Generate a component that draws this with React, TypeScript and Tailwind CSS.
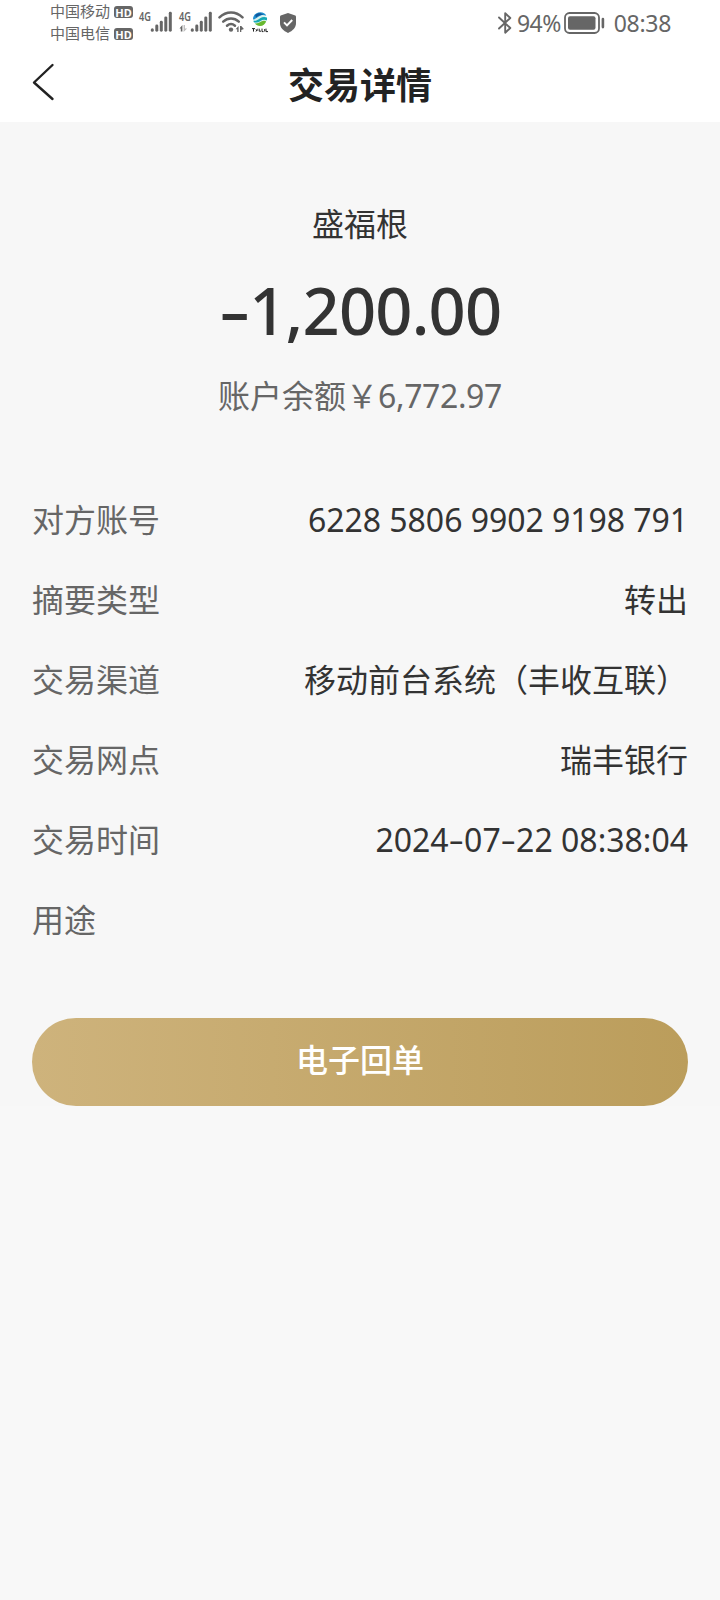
import { Fragment } from 'react'
import clsx from 'clsx'

type DetailItem = {
  label: string
  value: string
  className?: string
}

const details: DetailItem[] = [
  { label: '对方账号', value: '6228 5806 9902 9198 791', className: 'tracking-[-0.05px]' },
  { label: '摘要类型', value: '转出' },
  { label: '交易渠道', value: '移动前台系统（丰收互联）' },
  { label: '交易网点', value: '瑞丰银行' },
  { label: '交易时间', value: '2024-07-22 08:38:04' },
  { label: '用途', value: '' },
]

const carriers = ['中国移动', '中国电信']

// Figures use a wider dash than the font's own hyphen
function Figures({ text }: { text: string }) {
  return (
    <>
      {text.split('-').map((part, index) => (
        <Fragment key={index}>
          {index > 0 && <span className="mx-[0.08em] inline-block scale-x-150">-</span>}
          {part}
        </Fragment>
      ))}
    </>
  )
}

function SignalIcon({ active = false }: { active?: boolean }) {
  return (
    <svg width="34" height="22" viewBox="0 0 34 22" fill="#666" className="overflow-visible">
      <text
        x="0"
        y="10.2"
        fontSize="13"
        fontWeight="600"
        textLength="12"
        lengthAdjust="spacingAndGlyphs"
      >
        4G
      </text>
      {active && (
        <>
          <path d="M0.5 17.5 3.4 14v6.5H1.8v-3z" />
          <path d="M4.6 14h1.3v3.5h2.2L4.6 21z" fill="#bbb" />
        </>
      )}
      <rect x="11.8" y="17.3" width="3" height="3.4" rx="1.5" />
      <rect x="16.3" y="13.6" width="3" height="7.1" rx="1.4" />
      <rect x="20.8" y="9.8" width="3" height="10.9" rx="1.4" />
      <rect x="25.3" y="5.4" width="3" height="15.3" rx="1.4" />
      <rect x="29.8" y="0.8" width="3" height="19.9" rx="1.4" />
    </svg>
  )
}

function WifiIcon() {
  return (
    <svg width="26" height="22" viewBox="0 0 26 22" fill="none">
      <g stroke="#666" strokeWidth="2.5" strokeLinecap="round">
        <path d="M1.5 6.4C8.2-.1 17.8-.1 24.5 6.4" />
        <path d="M5.2 10.7c4.6-4.2 11-4.2 15.6 0" />
        <path d="M9 14.7c2.4-2.1 5.6-2.1 8 0" />
      </g>
      <circle cx="13" cy="18.6" r="2.2" fill="#666" />
      <path d="M17.6 18.2 20.6 15v6h-1.4v-2.8zM22 15h1.3l2.6 3-2.6 1v2H22z" fill="#666" />
    </svg>
  )
}

function OperatorLogo() {
  return (
    <svg width="18" height="22" viewBox="0 0 18 22">
      <circle cx="9" cy="8.6" r="6.3" fill="#d9f1ee" />
      <path d="M2 8.6C1.8 4.6 5 1.3 9.3 1.3c3 0 5 1.4 6 3.5-3-1.3-5.2-.8-7.5.8C5.9 6.9 4.3 8.3 2 8.6z" fill="#1e8fcf" />
      <path d="M4.2 4.2C6.5 1.7 10.4 1.8 12.3 3.8c-3-.2-4.7 1-7.2 2.6z" fill="#12579c" />
      <path d="M2.3 9.8c3.2.2 4.7-1.2 6.8-2.6 2.3-1.5 4.9-1.7 6.8-.6.3 1 .2 2-.1 2.9-2-1.4-4.2-1-6.3.4-2.2 1.5-4.7 2-6.6 1.3z" fill="#14a9b5" />
      <path d="M3.9 12.5c2.6.3 4.5-.7 6.3-1.9 1.8-1.2 3.7-1.3 5-.1-1.1 2.7-3.3 4.5-6.1 4.5-2.2 0-4-.9-5.2-2.5z" fill="#68b82e" />
      <path
        d="M1 17.6h3M2.5 17.6v3M5 18.5l1.5 1.5M6.5 17.8l-1.5 2.7M8.2 17.7v2.5h1.8M11 17.6v3h1.5M13.7 18v2.5M15 17.6v3h2"
        stroke="#222"
        strokeWidth="1"
        fill="none"
      />
    </svg>
  )
}

function ShieldIcon() {
  return (
    <svg width="18" height="22" viewBox="0 0 18 22">
      <path
        d="M9 1 16.3 3.6c.4.2.7.5.7 1V11c0 4.6-3.3 7.9-8 9.9C4.3 18.9 1 15.6 1 11V4.6c0-.5.3-.8.7-1z"
        fill="#666"
      />
      <path d="M5 10.4l3 3 5.2-5.4" fill="none" stroke="#fff" strokeWidth="2" />
    </svg>
  )
}

function BluetoothIcon() {
  return (
    <svg width="14" height="24" viewBox="0 0 14 24" fill="none" stroke="#666" strokeWidth="1.9">
      <path d="M1 6.5 12.3 17 7.2 21.7V2.3L12.3 7 1 17.5" strokeLinejoin="round" strokeLinecap="round" />
    </svg>
  )
}

function BatteryIcon() {
  return (
    <svg width="41" height="22" viewBox="0 0 41 22">
      <rect x="1" y="1" width="34" height="20" rx="4.5" fill="none" stroke="#666" strokeWidth="1.8" />
      <rect x="4" y="4.2" width="27.5" height="13.6" rx="2" fill="#666" />
      <rect x="37.6" y="5.8" width="2.6" height="10.6" rx="1.3" fill="#666" />
    </svg>
  )
}

function StatusBar() {
  return (
    <div className="flex h-11 items-start justify-between pr-[49px] pl-[50px] text-[#666]">
      <div className="flex items-start">
        <div className="flex flex-col">
          {carriers.map((name) => (
            <div key={name} className="flex h-[22px] items-center gap-1">
              <span className="text-[15px] leading-none">{name}</span>
              <span className="mt-0.5 flex h-3 w-[19px] items-center justify-center rounded-[3px] bg-[#666] text-[11px] font-bold leading-none text-white">
                HD
              </span>
            </div>
          ))}
        </div>
        <div className="mt-[11px] flex items-start">
          <div className="ml-1.5">
            <SignalIcon />
          </div>
          <div className="ml-1.5">
            <SignalIcon active />
          </div>
          <div className="ml-[5px]">
            <WifiIcon />
          </div>
          <div className="ml-[7px]">
            <OperatorLogo />
          </div>
          <div className="ml-2.5 mt-px">
            <ShieldIcon />
          </div>
        </div>
      </div>
      <div className="mt-[11px] flex h-6 items-center text-[23px] leading-none">
        <BluetoothIcon />
        <span className="ml-[5px] tracking-[-0.6px]">94%</span>
        <div className="ml-[3px]">
          <BatteryIcon />
        </div>
        <span className="ml-[9px] tracking-[-0.3px]">08:38</span>
      </div>
    </div>
  )
}

export default function App() {
  return (
    <div className="min-h-[1600px] w-[720px] bg-[#f8f8f8] font-['Noto_Sans','Noto_Sans_CJK_SC',sans-serif]">
      <header className="h-[122px] bg-white">
        <StatusBar />
        <div className="grid h-[78px] grid-cols-[1fr_auto_1fr] items-center px-8">
          <button type="button" aria-label="返回" className="-mt-0.5">
            <svg width="24" height="40" viewBox="0 0 24 40" fill="none" stroke="#222" strokeWidth="2.4">
              <path d="M20.5 3 2 20.5 20.5 37" strokeLinecap="round" strokeLinejoin="round" />
            </svg>
          </button>
          <h1 className="pt-1.5 text-4xl font-bold leading-none text-[#222]">交易详情</h1>
        </div>
      </header>

      <main className="bg-[#f7f7f7] px-8 pt-20">
        <section className="flex flex-col items-center">
          <p className="text-[32px] leading-[44px] text-[#333]">盛福根</p>
          <p className="mt-5 text-[65px] font-medium leading-[88px] tracking-[-0.8px] text-[#333]">
            <Figures text="-1,200.00" />
          </p>
          <p className="mt-5 text-[32px] leading-[44px] text-[#666]">
            账户余额￥<span className="tracking-[-0.4px]">6,772.97</span>
          </p>
        </section>

        <dl className="mt-[62px]">
          {details.map((item) => (
            <div key={item.label} className="flex h-20 items-center justify-between text-[32px] leading-10">
              <dt className="text-[#666]">{item.label}</dt>
              <dd className={clsx('text-[#333]', item.className)}>
                <Figures text={item.value} />
              </dd>
            </div>
          ))}
        </dl>

        <button
          type="button"
          className="mt-[58px] flex h-[88px] w-full items-center justify-center rounded-full bg-linear-to-r from-[#ceb37c] to-[#bb9d5b] pb-1 text-[32px] font-medium leading-none text-white"
        >
          电子回单
        </button>
      </main>
    </div>
  )
}
